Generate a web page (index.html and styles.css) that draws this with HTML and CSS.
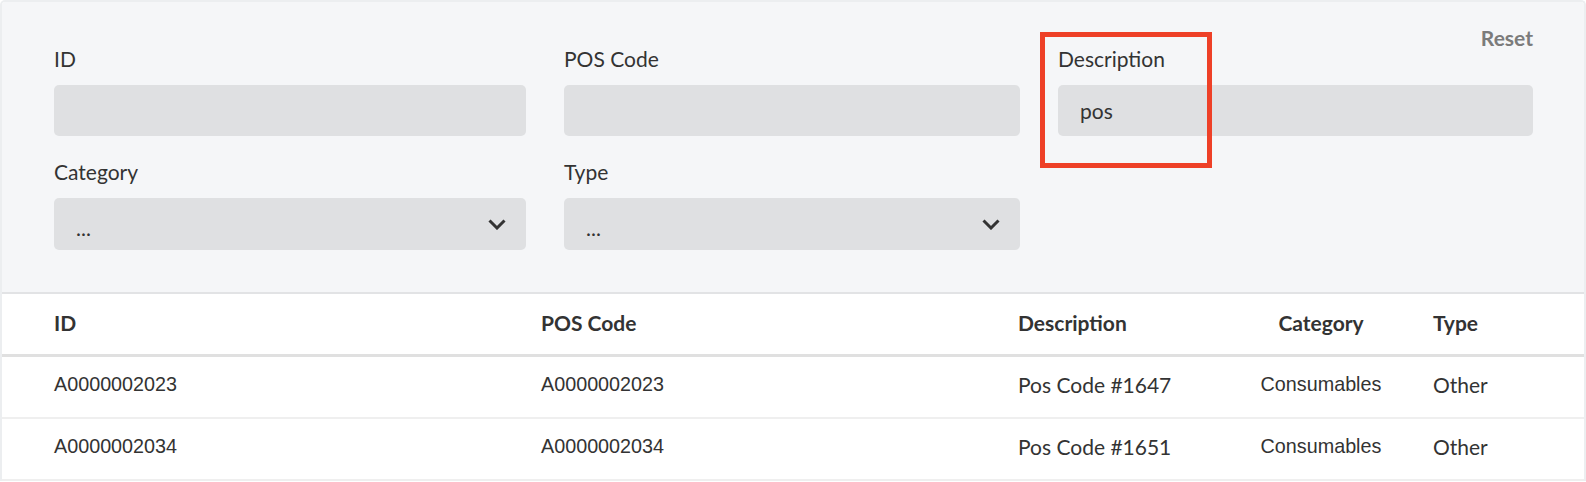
FILE: index.html
```html
<!DOCTYPE html>
<html lang="en">
<head>
<meta charset="utf-8">
<title>POS Codes</title>
<link rel="stylesheet" href="styles.css">
</head>
<body>
<div class="card">
  <section class="filters">
    <div class="filters-head"><button class="reset" type="button">Reset</button></div>
    <div class="filter-grid">
      <div class="field"><label class="field-label">ID</label><div class="input"></div></div>
      <div class="field"><label class="field-label">POS Code</label><div class="input"></div></div>
      <div class="field"><label class="field-label">Description</label><div class="input">pos</div></div>
      <div class="field"><label class="field-label">Category</label><div class="select"><span>...</span><svg class="chev" viewBox="0 0 18 11" width="18" height="11"><path d="M1.5 1.5 L9 9 L16.5 1.5" fill="none" stroke="#333" stroke-width="3"/></svg></div></div>
      <div class="field"><label class="field-label">Type</label><div class="select"><span>...</span><svg class="chev" viewBox="0 0 18 11" width="18" height="11"><path d="M1.5 1.5 L9 9 L16.5 1.5" fill="none" stroke="#333" stroke-width="3"/></svg></div></div>
    </div>
    <div class="highlight"></div>
  </section>
  <div class="table">
    <div class="row head">
      <div class="c-id">ID</div><div class="c-pos">POS Code</div><div class="c-desc">Description</div><div class="c-cat">Category</div><div class="c-type">Type</div>
    </div>
    <div class="row">
      <div class="c-id mono">A0000002023</div><div class="c-pos mono">A0000002023</div><div class="c-desc">Pos Code #1647</div><div class="c-cat mono">Consumables</div><div class="c-type">Other</div>
    </div>
    <div class="row">
      <div class="c-id mono">A0000002034</div><div class="c-pos mono">A0000002034</div><div class="c-desc">Pos Code #1651</div><div class="c-cat mono">Consumables</div><div class="c-type">Other</div>
    </div>
  </div>
</div>
</body>
</html>
```

FILE: styles.css
```css
* { box-sizing: border-box; }
html, body { margin: 0; padding: 0; background: #ffffff; }
body { font-family: "Lato", "Open Sans", sans-serif; color: #333; }

.card {
  width: 1586px;
  border: 2px solid #eceef0;
  border-bottom: 0;
  border-radius: 5px 5px 0 0;
  overflow: hidden;
}

.filters {
  position: relative;
  background: #f5f6f8;
  padding: 26px 51px 42px 52px;
}
.filters-head {
  display: flex;
  justify-content: flex-end;
  height: 20px;
}
.reset {
  border: 0;
  background: none;
  padding: 0;
  font: 700 21px/20px "Lato", sans-serif;
  color: #7b7b7b;
}
.filter-grid {
  display: grid;
  grid-template-columns: 472px 456px 475px;
  column-gap: 38px;
  row-gap: 25px;
}
.field { display: flex; flex-direction: column; }
.field-label {
  font-size: 21px;
  line-height: 22px;
  margin-bottom: 15px;
  color: #333;
}
.input, .select {
  height: 51px;
  background: #dfe0e2;
  border-radius: 5px;
  padding: 0 22px;
  display: flex;
  align-items: center;
  font-size: 21px;
  color: #333;
}
.select { height: 52px; justify-content: space-between; padding-right: 20px; }
.select span { padding-top: 6px; }

.highlight {
  position: absolute;
  left: 1038px;
  top: 30px;
  width: 172px;
  height: 136px;
  border: 5px solid #ee4027;
}

.table { border-top: 2px solid #e2e3e5; }
.row {
  display: grid;
  grid-template-columns: 487px 477px 210px 186px 1fr;
  padding-left: 52px;
  padding-bottom: 5px;
  height: 62px;
  align-items: center;
  border-bottom: 2px solid #efefef;
  font-size: 21px;
  color: #333;
}
.row.head { height: 63px; padding-bottom: 3px; border-bottom: 3px solid #e0e0e0; font-weight: 700; }
.c-cat { text-align: center; }
.c-type { padding-left: 19px; }
.mono { font-family: "Liberation Sans", Arial, sans-serif; font-size: 19.75px; }
```
